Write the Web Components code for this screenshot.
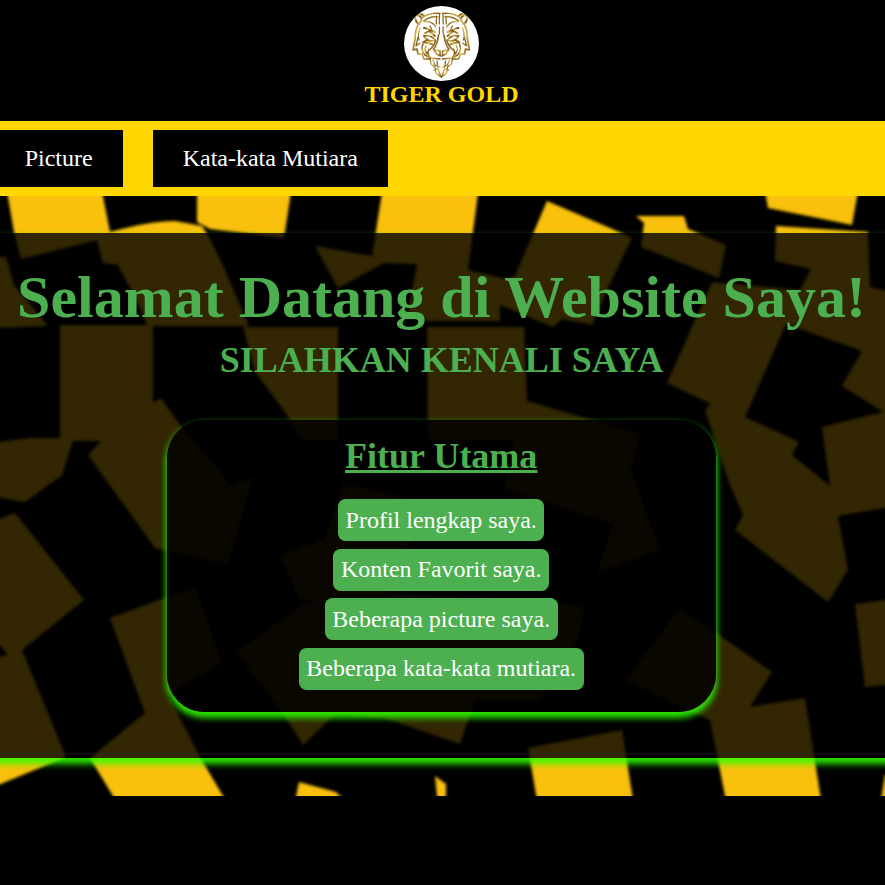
<!DOCTYPE html>
<html lang="id">
<head>
<meta charset="utf-8">
<title>Tiger Gold</title>
<style>
html,body{margin:0;background:#000}
body{font-family:"Liberation Serif","Times New Roman",serif;font-size:24px;overflow:hidden}
</style>
</head>
<body>
<tiger-page></tiger-page>
<script>
function define(name, html){
  const t=document.createElement('template');
  t.innerHTML=html;
  customElements.define(name, class extends HTMLElement{
    constructor(){
      super();
      this.attachShadow({mode:'open'}).appendChild(t.content.cloneNode(true));
    }
  });
}

define('tiger-logo', `
<style>:host{display:block;width:75px;height:75px}svg{display:block}</style>
<svg width="75" height="75" viewBox="0 0 75 75" aria-hidden="true">
<defs>
<linearGradient id="g" x1="0" y1="0" x2="1" y2="1"><stop offset="0" stop-color="#5f4314"/><stop offset=".25" stop-color="#d9b04c"/><stop offset=".45" stop-color="#7a5616"/><stop offset=".7" stop-color="#dcb650"/><stop offset="1" stop-color="#77551c"/></linearGradient>
<clipPath id="c"><circle cx="37.500" cy="37.500" r="37.500"/></clipPath>
<g id="h" fill="none" stroke="url(#g)" stroke-width="1.250" stroke-linejoin="round" stroke-linecap="round">
<path d="M36 7.500C29 6.500 23 8 18 12M34 11c-6-1-10 1-14 4" stroke-width="1.600"/><path d="M35.500 8l-.2 10M35.500 21l-.2 7M32.500 10l-.2 8" stroke="#8a6420"/>
<path d="M20 10C17 7 12 6 11 10c0 4 2 7 4 8M12 9c4 0 7 3 5 6" stroke-width="2"/>
<path d="M17 15c-5 5-6 11-6 18l-2 11 4-1 1 5 4 0 2 5 5 0" stroke-width="1.700"/>
<path d="M16 22c-2 5-2 9-1 12M14 31l-2 9 4-3M21 16c4-1 8 1 11 5M26 20l3 6"/>
<path d="M20 22c4 0 6 3 11 4M21 27l4-2 6 5" stroke-width="1.800"/>
<path d="M20 30c4-1 8 0 11 4-4 2-8 1-11-4M23 34l-4 2 9 2" stroke-width="1.900"/>
<path d="M34.500 29c-1 6-1 10-5 14l3 5 4 2M31.500 34c0 4-3 7-6 10M31 44l5 1v5" stroke-width="1.600"/>
<path d="M25 43c-2 4-1 7 2 9l9 1M19 38c-2 5-1 8 2 11l5 3M22 40c-2 4 0 7 3 9" stroke-width="1.500"/>
<path d="M26 52l1 6 4 3 1 6 5 4M29 54l2 5 5 2M33 55l1 7M30 64l4-1 3 8"/>
</g></defs>
<circle cx="37.500" cy="37.500" r="37.500" fill="#fff"/>
<g clip-path="url(#c)"><use href="#h"/><use href="#h" transform="translate(74.500 0) scale(-1 1)"/></g>
</svg>`);

define('site-header', `
<style>:host{display:flex;flex-direction:column;align-items:center;box-sizing:border-box;height:121px;padding:6px 2px 0 0;background:#000;color:gold}
h1{font-size:24px;line-height:27px;margin:0}</style>
<tiger-logo></tiger-logo><h1><slot></slot></h1>`);

define('nav-bar', `
<style>:host{display:flex;align-items:center;gap:30px;height:75px;background:gold;margin:0}
::slotted(:first-child){margin-left:-5px}</style><slot></slot>`);

define('nav-link', `
<style>:host{display:block;background:#000;color:#fff;padding:15px 30.300px 15px 29.700px;line-height:27px;white-space:nowrap}</style><slot></slot>`);

define('confetti-backdrop', `
<style>:host{display:block;overflow:hidden;height:600px}svg{display:block}</style>
<svg width="885" height="600" viewBox="0 196 885 600" aria-hidden="true">
<defs><filter id="b" x="-5%" y="-5%" width="110%" height="110%"><feGaussianBlur stdDeviation="1.700"/></filter></defs>
<rect y="196" width="885" height="600" fill="#000"/>
<g filter="url(#b)" fill="#f9c00a">
<path d="M6 186H101L110 232Q150 221 175 221L202 226 210 239 225 270 249 326H148L132 292 118 265 103 263 97 240 21 259 14 232Z"/>
<path d="M-9 256L6 257 14 285 48 326 -9 328Z"/>
<path d="M60 325H153V403L161 398 180 425 232 486 253 476 228 565 155 548 88 455 101 441H73L62 475 25 502 -9 496V443L30 438H60Z"/>
<path d="M197 186H292L284 238 210 229 197 222Z"/>
<path d="M383 186H479L468 270 506 279 515 276 547 201 610 228 632 238 606 292 592 325 562 319 553 327 500 305V321H427L408 312 417 264 384 263 338 288 315 246 372 256Z"/>
<path d="M243 327H338V440H302L285 412 255 372Z"/>
<path d="M427 327H524L527 401 640 434 631 470 660 550 597 573 613 524 504 489 514 440H428Z"/>
<path d="M636 216H684L688 229 726 245 719 278 641 247 644 223Z"/>
<path d="M764 186H859L852 225 818 218 768 208Z"/>
<path d="M776 226L868 232 870 287 895 293V415L880 410 842 386 862 351 786 324 745 417 799 442 792 455 830 486 822 427 895 409V506L838 516 848 570 828 602 735 530 743 515 728 480 705 410 711 404 667 383 712 282 800 290 811 269 775 261Z"/>
<path d="M-9 522L15 513 84 600 22 650 66 757 -9 788V658L8 655 -9 635Z"/>
<path d="M110 618L195 587 222 662 168 695 200 757 229 806H119L90 758 145 713Z"/>
<path d="M343 484L425 501 410 543 385 600 300 600 280 555 325 538Z"/>
<path d="M236 652L305 603 350 590 585 605 578 640 540 700 475 700 460 744 385 718 335 714 303 745 284 715Z"/>
<path d="M680 608L772 672 750 707 805 698 822 806H727L710 720 625 680Z"/>
<path d="M528 748L622 730 634 806H538Z"/>
<path d="M855 604L895 599V684L865 687Z"/>
<path d="M294 806L299 782 336 792 350 806ZM438 806L435 776 446 784 446 806ZM880 806L885 775H895V806Z"/>
</g></svg>`);

define('feature-item', `
<style>:host{display:block;background:#4caf50;color:#fff;padding:7.500px;line-height:27px;border-radius:7.500px;white-space:nowrap}</style><slot></slot>`);

define('feature-card', `
<style>:host{display:flex;flex-direction:column;align-items:center;gap:7.500px;box-sizing:border-box;width:549px;height:292px;padding:16px .6px 0 0;border-radius:37.500px;background:rgba(0,0,0,.8);box-shadow:0 4.500px 6.500px 1px rgba(47,255,0,.9)}
h2{margin:0 0 14.500px;font-size:36px;line-height:41px;text-decoration:underline;text-decoration-thickness:3px;color:#4caf50}</style>
<h2><slot name="title"></slot></h2><slot></slot>`);

define('welcome-hero', `
<style>:host{display:flex;flex-direction:column;align-items:center;box-sizing:border-box;height:525px;padding:30px 22px 0 20px;background:rgba(0,0,0,.8);box-shadow:0 4.500px 6.500px 1px rgba(47,255,0,.9);color:#4caf50}
h1{margin:0;font-size:60px;line-height:69px;white-space:nowrap}
p{margin:8px 0 39px;font-size:36px;line-height:41px;font-weight:bold}</style>
<h1><slot name="title"></slot></h1><p><slot name="subtitle"></slot></p><slot></slot>`);

define('hero-stage', `
<style>:host{display:grid;height:600px;overflow:hidden}
::slotted(*){grid-area:1/1}
::slotted(welcome-hero){align-self:start;margin:37px -20px 0;z-index:1;min-width:0}</style><slot></slot>`);

define('tiger-page', `
<style>:host{display:block;width:885px;height:885px;background:#000;overflow:hidden}</style>
<site-header>TIGER GOLD</site-header>
<nav-bar><nav-link>Picture</nav-link><nav-link>Kata-kata Mutiara</nav-link></nav-bar>
<hero-stage>
<confetti-backdrop></confetti-backdrop>
<welcome-hero><span slot="title">Selamat Datang di Website Saya!</span><span slot="subtitle">SILAHKAN KENALI SAYA</span>
<feature-card><span slot="title">Fitur Utama</span>
<feature-item>Profil lengkap saya.</feature-item>
<feature-item>Konten Favorit saya.</feature-item>
<feature-item>Beberapa picture saya.</feature-item>
<feature-item>Beberapa kata-kata mutiara.</feature-item>
</feature-card></welcome-hero>
</hero-stage>`);
</script>
</body>
</html>
